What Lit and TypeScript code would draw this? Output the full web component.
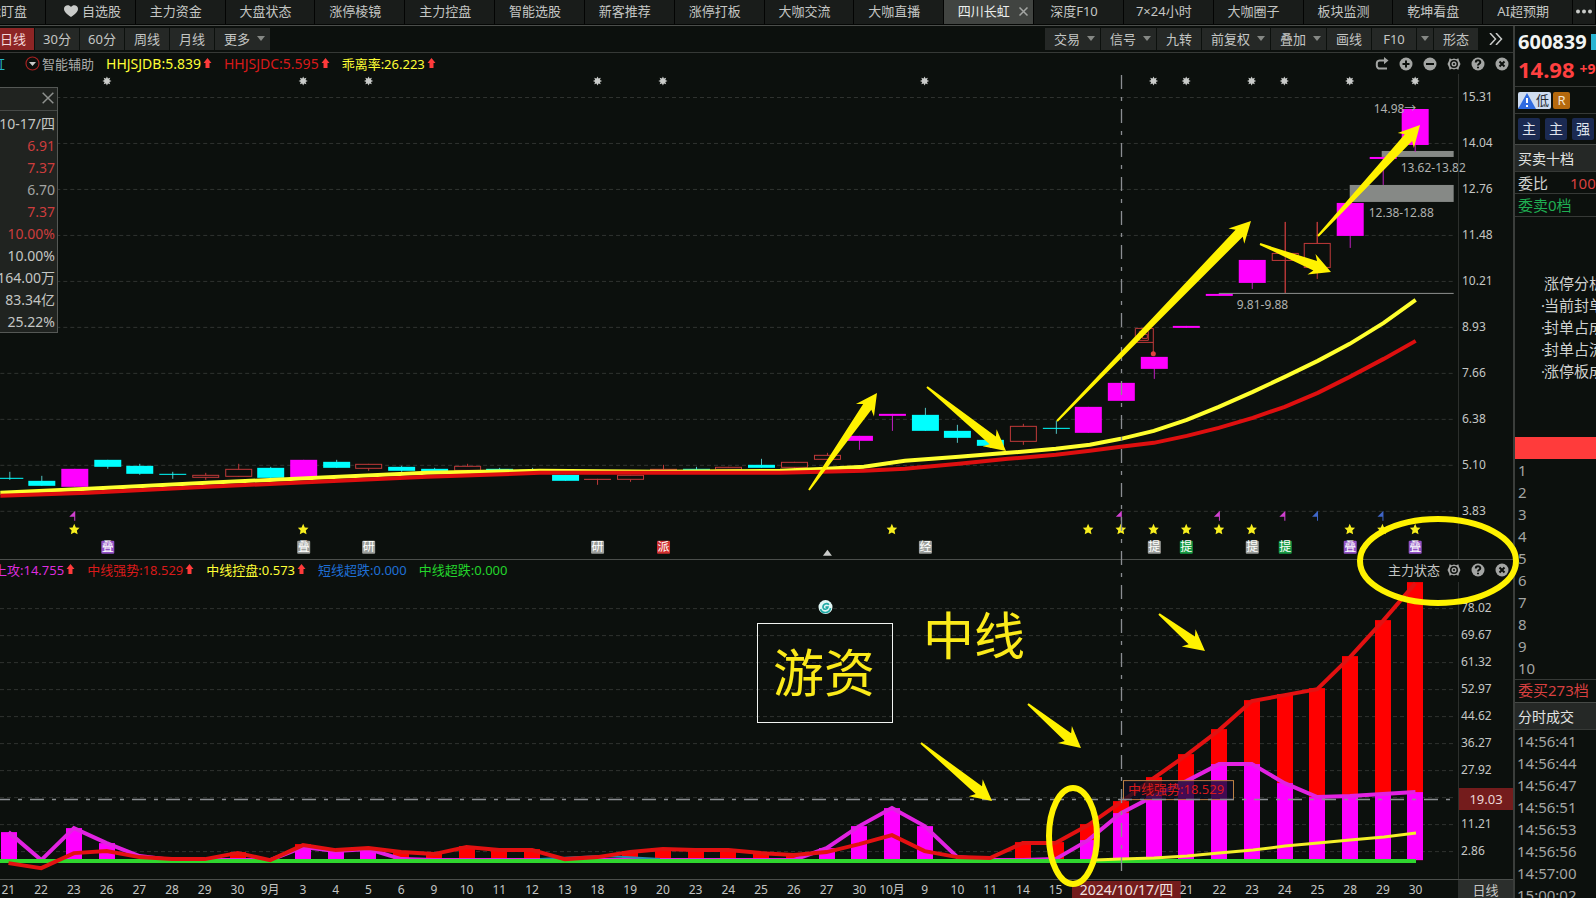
import { LitElement, html, svg, css } from "lit";
import { customElement } from "lit/decorators.js";
import { classMap } from "lit/directives/class-map.js";

type Kind = "mag" | "cyan" | "red";
/** kind, body top, body bottom, wick top, wick bottom (plot units) */
type Candle = [Kind, number, number, number, number];

const STEP = 32.72;
const cx = (i: number) => 8.5 + STEP * i;

const TABS = ["自选股", "主力资金", "大盘状态", "涨停棱镜", "主力控盘", "智能选股", "新客推荐", "涨停打板", "大咖交流",
  "大咖直播", "四川长虹", "深度F10", "7×24小时", "大咖圈子", "板块监测", "乾坤看盘", "AI超预期"];

const DATES = ["21", "22", "23", "26", "27", "28", "29", "30", "9月", "3", "4", "5", "6", "9", "10", "11", "12", "13",
  "18", "19", "20", "23", "24", "25", "26", "27", "30", "10月", "9", "10", "11", "14", "15"];
const DATES_AFTER = ["21", "22", "23", "24", "25", "28", "29", "30"];

const CANDLES: Candle[] = [
  ["cyan", 478, 479, 472, 480], ["cyan", 481, 486, 476, 486], ["mag", 469, 487, 469, 487],
  ["cyan", 460, 467, 460, 469], ["cyan", 466, 474, 464, 475], ["cyan", 474, 475, 472, 479],
  ["red", 475, 478, 473, 480], ["red", 469, 477, 464, 477], ["cyan", 468, 478, 467, 478],
  ["mag", 460, 478, 460, 478], ["cyan", 462, 468, 460, 468], ["red", 464, 469, 464, 471],
  ["cyan", 467, 471, 466, 472], ["cyan", 469, 473, 468, 473], ["red", 466, 471, 464, 471],
  ["cyan", 469, 471, 468, 471], ["cyan", 470, 471, 468, 471], ["cyan", 475, 481, 475, 481],
  ["red", 479, 479, 479, 485], ["red", 475, 480, 475, 482], ["red", 469, 471, 465, 471],
  ["cyan", 469, 470, 467, 471], ["red", 467, 470, 467, 470], ["cyan", 465, 468, 459, 468],
  ["red", 462, 468, 462, 469], ["red", 455, 460, 453, 460], ["mag", 436, 441, 436, 450],
  ["mag", 414, 416, 414, 431], ["cyan", 415, 431, 408, 431], ["cyan", 431, 438, 425, 443],
  ["cyan", 440, 446, 440, 448], ["red", 426, 442, 424, 445], ["cyan", 428, 429, 421, 434],
  ["mag", 407, 433, 407, 433], ["mag", 383, 401, 383, 401], ["mag", 357, 369, 357, 379],
  ["mag", 326, 328, 326, 328], ["mag", 294, 296, 294, 296], ["mag", 260, 283, 260, 289],
  ["red", 253, 261, 222, 293], ["red", 243, 268, 222, 279], ["mag", 203, 236, 203, 248],
  ["mag", 157, 159, 157, 185], ["mag", 109, 145, 109, 152],
];

const MA_FAST: number[][] = [[0, 493], [88, 489], [207, 483], [317, 478], [427, 473], [540, 471], [660, 472], [780, 471],
  [826, 469], [864, 467], [905, 461], [959, 457], [1008, 453], [1056, 449], [1090, 445], [1121, 439], [1154, 431],
  [1187, 420], [1219, 407], [1253, 392], [1285, 377], [1318, 361], [1350, 344], [1384, 323], [1416, 300]];
const MA_SLOW: number[][] = [[0, 496], [88, 493], [207, 487], [317, 482], [427, 477], [540, 473], [660, 473], [780, 473],
  [864, 471], [905, 469], [959, 464], [1008, 459], [1056, 455], [1090, 451], [1121, 447], [1154, 443], [1187, 436],
  [1219, 428], [1253, 418], [1285, 407], [1318, 393], [1350, 377], [1384, 359], [1416, 341]];

const SUNS = [3, 9, 11, 18, 20, 28, 35, 36, 38, 39, 41, 43];
const STARS = [2, 9, 27, 33, 34, 35, 36, 37, 38, 41, 42, 43];
const FLAGS: [number, string][] = [[2, "flag-m"], [34, "flag-m"], [37, "flag-m"], [39, "flag-m"], [40, "flag-b"], [42, "flag-b"]];
const BADGES: [number, string, string][] = [[3, "叠", "b-purple"], [9, "叠", "b-grey"], [11, "研", "b-grey"],
  [18, "研", "b-grey"], [20, "派", "b-red"], [28, "经", "b-grey"], [35, "提", "b-grey"], [36, "提", "b-green"],
  [38, "提", "b-grey"], [39, "提", "b-green"], [41, "叠", "b-purple"], [43, "叠", "b-purple"]];

const BASE = 860;
const STRONG = [863, 868, 853, 851, 857, 859, 859, 853, 860, 845, 850, 848, 852, 854, 847, 850, 850, 859, 857, 852, 849,
  850, 850, 853, 855, 852, 844, 835, 851, 857, 858, 843, 843, 825, 802, 778, 755, 730, 701, 695, 689, 657, 621, 583];
const ATTACK = [832, 860, 828, 843, 856, 860, 860, 860, 860, 847, 851, 849, 859, 860, 860, 860, 860, 860, 860, 860, 860,
  860, 860, 860, 860, 848, 826, 808, 826, 857, 860, 860, 859, 840, 813, 796, 781, 764, 764, 783, 797, 796, 794, 792];
const NO_STRONG_BAR = [0, 1, 2, 3, 4, 5, 6, 8, 17, 18, 25, 26, 27, 28, 29, 30];

const pts = (p: number[][]) => p.map((q) => q.join(",")).join(" ");
const line = (ys: number[]) => pts(ys.map((y, i) => [cx(i), y]));

/** Tapered arrow from a thin tail to a broad head. */
function arrow(x1: number, y1: number, x2: number, y2: number) {
  const len = Math.hypot(x2 - x1, y2 - y1);
  const ux = (x2 - x1) / len, uy = (y2 - y1) / len;
  const at = (back: number, side: number) => [x2 - ux * back - uy * side, y2 - uy * back + ux * side];
  return svg`<polygon class="mark" points=${pts([at(len, 1), at(17, 5), at(21, 11), [x2, y2], at(21, -11), at(17, -5), at(len, -1)])}></polygon>`;
}

const upArrow = html`<svg class="up" viewBox="0 0 9 11" aria-hidden="true"><path d="M4.500 0 8.500 5H6.500V10H2.500V5H.5Z"/></svg>`;
const caret = html`<svg class="caret" viewBox="0 0 8 5" aria-hidden="true"><path d="M0 0h8L4 5Z"/></svg>`;

const ICONS: Record<string, unknown> = {
  redo: svg`<path class="ln" d="M10.500 3.500H4.500A3 3 0 0 0 1.800 6.500v2A3 3 0 0 0 4.800 11.600H12"/><path d="M9 0 13.500 3.600 9 7.200Z"/>`,
  plus: svg`<circle cx="7" cy="7" r="6.500"/><path class="cut" d="M7 3.500v7M3.500 7h7"/>`,
  minus: svg`<circle cx="7" cy="7" r="6.500"/><path class="cut" d="M3 7h8"/>`,
  gear: svg`<path fill-rule="evenodd" d="M2.600 1.200 4.800 2.200 7 1.500 9.200 2.200 11.400 1.200 12 3.800 13.500 7 12 10.200 11.400 12.800 9.200 11.800 7 12.500 4.800 11.800 2.600 12.800 2 10.200.5 7 2 3.800ZM7 3A4 4 0 1 0 7 11 4 4 0 1 0 7 3Z"/><circle class="ln thin" cx="7" cy="7" r="1.800"/>`,
  help: svg`<circle cx="7" cy="7" r="6.500"/><path class="cut" d="M4.800 5.400C4.800 2.600 9.300 2.600 9.300 5.200 9.300 6.800 7 6.700 7 8.600M7 9.800V11.300"/>`,
  close: svg`<circle cx="7" cy="7" r="6.500"/><path class="cut" d="M4.500 4.500l5 5M9.500 4.500l-5 5"/>`,
};
const iconButton = (name: string, label: string) => html`<button class="icon" aria-label=${label}>
  <svg viewBox="0 0 14 14" aria-hidden="true">${ICONS[name]}</svg></button>`;

@customElement("app-root")
export class AppRoot extends LitElement {
  static styles = css`
    :host {
      display: flex; flex-direction: column; position: relative; height: 100vh; overflow: hidden;
      background: #0c100d; color: #c4c6c4; font: 13px/20px "Noto Sans", "Noto Sans CJK SC", sans-serif;
      white-space: nowrap;
    }
    * { box-sizing: border-box; }
    button { font: inherit; color: inherit; background: none; border: 0; padding: 0; margin: 0; white-space: nowrap; }
    ol, ul, dl, dd, p, h2 { margin: 0; padding: 0; list-style: none; font: inherit; }
    svg { display: block; }

    .tabs { flex: none; display: grid; grid-template-columns: 46px repeat(17, 1fr) 23px; height: 26px;
      padding-bottom: 1px; background: #050705; border-bottom: 1px solid #4b4e4b; }
    .tab { display: flex; align-items: center; justify-content: center; gap: 4px; background: #191c1a;
      border-right: 1px solid #030403; padding-right: 9px; overflow: hidden; height: 24px; line-height: 22px; padding-bottom: 2px; }
    .tab.first { justify-content: flex-end; padding-right: 18px; }
    .tab.fav { padding: 0 0 2px 4px; }
    .tab.on { background: #414441; color: #eceeec; padding: 0 0 2px 8px; gap: 9px; }
    .tab.more { padding-right: 0; }
    .heart { width: 14px; height: 12px; fill: #c9cbc9; }
    .x { width: 9px; height: 9px; stroke: #a4a6a4; stroke-width: 1.500; fill: none; }
    .dots { width: 19px; height: 5px; fill: #c9cbc9; }

    .body { flex: 1; min-height: 0; display: grid; grid-template-columns: minmax(0, 1fr) 83px; }
    .left { display: flex; flex-direction: column; min-width: 0; min-height: 0; }

    .toolbar { flex: none; display: flex; justify-content: space-between; align-items: center; height: 27px;
      border-bottom: 1px solid #363936; padding-top: 1px; padding-bottom: 2px; }
    .group { display: flex; gap: 1px; }
    .tool { height: 22px; line-height: 20px; width: 44px; background: #252826; display: flex; align-items: center;
      justify-content: center; gap: 7px; }
    .tool.cur { background: #8d2525; color: #f4dada; width: 34px; padding-right: 8px; }
    .tool.drop { width: auto; padding: 0 5px 0 9px; }
    .tool.slim { width: 16px; }
    .tool.next { background: none; width: 34px; }
    .caret { width: 8px; height: 5px; fill: #858885; }
    .chev { width: 14px; height: 12px; fill: none; stroke: #c9cbc9; stroke-width: 1.500; }

    .pane { min-height: 0; display: grid; grid-template-columns: minmax(0, 1fr) 55px; position: relative; }
    .price { flex: 507; grid-template-rows: 21px minmax(0, 1fr); border-bottom: 1px solid #4b4e4b; }
    .force { flex: 320; grid-template-rows: 22px minmax(0, 1fr); border-bottom: 1px solid #4b4e4b; }
    .head { grid-column: 1 / -1; display: flex; align-items: center; justify-content: space-between; padding: 0 4px 2px 0; }
    .price .head { padding-bottom: 0; }
    .legend { display: flex; align-items: center; gap: 12px; }
    .legend.scrolled { margin-left: -6px; }
    .item { display: flex; align-items: center; gap: 2px; }
    .item.wide { font-size: 14px; }
    .picker { display: flex; align-items: center; gap: 2px; color: #a9aba9; }
    .ring { width: 15px; height: 15px; }
    .ring circle { fill: none; stroke: #a52222; stroke-width: 1.200; }
    .ring path { fill: #c9cbc9; }
    .stock { color: #23b5c8; width: 14px; overflow: hidden; display: flex; justify-content: flex-end; margin: 0 8px 0 -9px; }
    .up { width: 9px; height: 11px; fill: #ff3b3b; }
    .yellow { color: #ffff35; }
    .redtx { color: #d81a1a; }
    .magtx { color: #dd2ddd; }
    .bluetx { color: #1f6fd6; }
    .greentx { color: #23d52b; }
    .icons { display: flex; align-items: center; gap: 10px; }
    .icons h2 { margin-right: -3px; }
    .icon { width: 14px; height: 14px; }
    .icon svg { width: 14px; height: 14px; fill: #a3a5a3; }
    .ln { fill: none; stroke: #a3a5a3; stroke-width: 2; }
    .ln.thin { stroke-width: 1.400; }
    .cut { fill: none; stroke: #0c100d; stroke-width: 2; }

    .plot { width: 100%; height: 100%; overflow: visible; }
    .axis { display: grid; border-left: 1px solid #2c2f2c; font-size: 12px; padding-left: 3px; position: relative; align-items: center; }
    .axis.a1 { grid-template-rows: repeat(10, 46fr) 25fr; }
    .axis.a2 { grid-template-rows: 13fr repeat(10, 27fr) 14fr; padding-left: 2px; }
    .now { position: absolute; left: 0; right: 0; top: 73%; height: 22px; line-height: 22px; margin-top: -11px;
      background: #741c1c; color: #ead6d6; text-align: center; font-size: 13px; }

    .grid { stroke: #303330; stroke-width: 1; stroke-dasharray: 4 3; }
    .mag { fill: #ff00ff; stroke: none; }
    .cyan { fill: #00ffff; stroke: none; }
    .red { fill: #0c100d; stroke: #c03a3a; stroke-width: 1; }
    .w-mag { stroke: #c41fc4; }
    .w-cyan { stroke: #52c4c4; }
    .w-red { stroke: #c03a3a; }
    .fast { fill: none; stroke: #ffff2e; stroke-width: 4; }
    .slow { fill: none; stroke: #de0f0f; stroke-width: 4; }
    .gap { fill: #868986; }
    .gapline { stroke: #8f928f; }
    .note { font-size: 12px; fill: #b0b2b0; dominant-baseline: central; }
    .sun { fill: #c9cbc9; }
    .star { fill: #f7ee1e; }
    .flag-m { fill: #d040d0; }
    .flag-b { fill: #3f66c8; }
    .badge { font-size: 12px; fill: #fff; text-anchor: middle; dominant-baseline: central; }
    .b-purple { fill: #9152c4; }
    .b-grey { fill: #9c9f9c; }
    .b-red { fill: #d03030; }
    .b-green { fill: #189a45; }
    .hint { fill: none; stroke: #c03a3a; }
    .hint-dot { fill: #e04040; }

    .bar-m { fill: #ff00ff; }
    .bar-r { fill: #ff0000; }
    .l-m { fill: none; stroke: #e222e2; stroke-width: 4; }
    .l-r { fill: none; stroke: #e31111; stroke-width: 4; }
    .l-y { fill: none; stroke: #f5ef28; stroke-width: 3; }
    .l-b { fill: none; stroke: #2a8ab0; stroke-width: 2; }
    .zero { stroke: #2fd62f; stroke-width: 4; }
    .tip { fill: rgba(14, 14, 34, 0.780); stroke: #bb8044; }
    .tiptx { fill: #d81a1a; font-size: 13px; dominant-baseline: central; }
    .swirl { fill: #dff6f4; }
    .swirl-ln { fill: none; stroke: #1fa9a5; stroke-width: 1.600; }

    .info { position: absolute; left: 0; top: 34px; width: 58px; border: 1px solid #555855; border-left: 0;
      background: #202320; font-size: 14px; line-height: 22px; overflow: hidden; }
    .info-head { display: flex; justify-content: flex-end; align-items: center; height: 23px; padding: 0 3px 2px 0;
      border-bottom: 1px solid #464946; }
    .info-head .x { width: 12px; height: 12px; stroke: #8f928f; stroke-width: 1.100; }
    .info dl { display: flex; flex-direction: column; align-items: flex-end; padding: 2px 2px 0 0; margin-bottom: -1px; }
    .hot { color: #cc3d3d; }
    .dim { color: #a3a5a3; }

    .dates { flex: none; display: grid; grid-template-columns: minmax(0, 1fr) 55px; height: 18px; line-height: 20px; font-size: 12px; }
    .slots { display: grid; grid-template-columns: repeat(44, minmax(0, 1fr)); margin-left: -8px; padding-right: 26px; text-align: center; }
    .slots span { display: flex; justify-content: center; }
    .slots .picked { grid-column: 34 / span 3; width: 109px; height: 17px; background: #741c1c; color: #f0e2e2; font-size: 14px; margin-top: 1px; line-height: 18px; }
    .slots .after { grid-column-start: 37; }
    .period { background: #2b2e2c; text-align: center; font-size: 13px; line-height: 18px; }

    .side { border-left: 2px solid #3b3e3b; display: flex; flex-direction: column; min-height: 0; overflow: hidden;
      font-size: 15px; line-height: 22px; }
    .side > * { flex: none; padding-left: 3px; }
    .code { display: flex; align-items: center; gap: 4px; height: 31px; font-size: 20px; font-weight: 700; color: #f2f4f2; }
    .code i { width: 16px; height: 16px; background: #29b4d2; }
    .quote { display: flex; align-items: center; gap: 5px; height: 30px; padding-bottom: 5px; font-size: 22px; font-weight: 700; color: #ff4040;
      border-bottom: 1px solid #363936; }
    .quote small { font-size: 14px; }
    .tags { display: flex; align-items: center; gap: 2px; height: 27px; border-bottom: 1px solid #363936; }
    .low { display: flex; height: 17px; line-height: 16px; font-size: 13px; background: #cfdcf0; color: #262c34; border-radius: 2px; padding-right: 2px; }
    .low svg { width: 18px; height: 17px; }
    .rr { width: 17px; height: 17px; line-height: 17px; text-align: center; font-size: 13px; background: #b5690e; color: #f4e6d0; border-radius: 2px; }
    .chips { display: flex; align-items: center; gap: 5px; height: 31px; border-bottom: 1px solid #464946; }
    .chip { width: 22px; height: 22px; line-height: 20px; font-size: 14px; background: #1b2a52; color: #dfe3ec; text-align: center; flex: none; border-radius: 2px; }
    .title { height: 27px; line-height: 28px; background: #252826; color: #e2e4e2; font-size: 14px; border-bottom: 1px solid #363936; }
    .row { display: flex; gap: 22px; height: 22px; line-height: 22px; border-bottom: 1px solid #363936; color: #cfd1cf; }
    .row .hot { color: #d84040; }
    .ask { height: 23px; line-height: 22px; border-bottom: 1px solid #363936; color: #1fae52; }
    .side > .limit { flex: 1; padding: 55px 0 0 29px; min-height: 0; color: #cfd1cf; }
    .limit li::before { content: "·"; display: inline-block; width: 2px; margin-left: -2px; text-indent: -1px; }
    .block { height: 22px; background: #ff3b3b; }
    .levels, .times { color: #a3a5a3; }
    .levels { border-bottom: 1px solid #363936; }
    .bid { height: 23px; line-height: 21px; border-bottom: 1px solid #464946; color: #d84040; }
    .times { height: 168px; overflow: hidden; }
    .side > .times { padding-left: 2px; }

    .overlay { position: absolute; inset: 0; width: 100%; height: 100%; pointer-events: none; }
    .cross { stroke: #8b8e92; stroke-width: 1.300; stroke-dasharray: 14 8 4 8; }
    .mark { fill: #fff200; }
    .loop { fill: none; stroke: #fff200; stroke-width: 6; }
    .frame { fill: none; stroke: #f2f4f2; stroke-width: 1; }
    .big { fill: #fbea1a; font-size: 51px; dominant-baseline: central; text-anchor: middle; }
  `;

  private candle = ([kind, top, bottom, wt, wb]: Candle, i: number) => {
    const x = Math.round(cx(i));
    const hollow = kind === "red";
    return svg`<path class=${"w-" + kind} d=${`M${x + 0.5} ${wt}V${wb}`}></path>
      <rect class=${kind} x=${x - 13 + (hollow ? 0.5 : 0)} y=${top + (hollow ? 0.5 : 0)}
        width=${hollow ? 26 : 27} height=${Math.max(bottom - top - (hollow ? 1 : 0), hollow ? 0.1 : 1)}></rect>
      ${hollow && i >= 39 ? svg`<path class="w-red" d=${`M${x + 0.5} ${wt}V${i === 39 ? wb : top}`}></path>` : ""}`;
  };

  private pricePlot() {
    const rays = Array.from({ length: 16 }, (_, k) => {
      const r = k % 2 ? 2.6 : 4.6, a = (k * Math.PI) / 8;
      return [r * Math.cos(a), r * Math.sin(a)];
    });
    return html`<svg class="plot" viewBox="0 74 1458 485" role="img" aria-label="日K线">
      ${Array.from({ length: 10 }, (_, k) => svg`<path class="grid" d=${`M0 ${97.5 + 46 * k}H1453`}></path>`)}
      <rect class="gap" x="1382" y="151" width="72" height="6"></rect>
      <rect class="gap" x="1350" y="185" width="104" height="17"></rect>
      ${CANDLES.map(this.candle)}
      <path class="gapline" d="M1219 293.500H1454"></path>
      <polyline class="fast" points=${pts(MA_FAST)}></polyline>
      <polyline class="slow" points=${pts(MA_SLOW)}></polyline>
      <text class="note" x="1374" y="109">14.98→</text>
      <text class="note" x="1401" y="168">13.62-13.82</text>
      <text class="note" x="1369" y="213">12.38-12.88</text>
      <text class="note" x="1237" y="305">9.81-9.88</text>
      <path class="hint" d="M1153.500 354V328.500H1135.500V342.500H1153.500M1139.500 331.500h9v9h-9ZM1142.500 334.500h5v4h-5Z"></path>
      <circle class="hint-dot" cx="1153.500" cy="354" r="2.500"></circle>
      ${SUNS.map((i) => svg`<polygon class="sun" points=${pts(rays.map(([x, y]) => [cx(i) + x, 81 + y]))}></polygon>`)}
      ${FLAGS.map(([i, c]) => svg`<path class=${c} d=${`M${cx(i) + 1} 511V521H${cx(i)}V517H${cx(i) - 5}Z`}></path>`)}
      ${STARS.map((i) => svg`<path class="star" transform=${`translate(${cx(i)} 529.500)`}
        d="M0-5.500 1.600-1.800 5.300-1.500 2.600 1.200 3.400 5 0 3.200-3.400 5-2.600 1.200-5.300-1.500-1.600-1.800Z"></path>`)}
      ${BADGES.map(([i, t, c]) => svg`<rect class=${c} x=${Math.round(cx(i)) - 6} y="541" width="13" height="13" rx="1"></rect>
        <text class="badge" x=${Math.round(cx(i)) + 0.5} y="547">${t}</text>`)}
      <path class="sun" d="M827.500 550 832 556H823Z"></path>
    </svg>`;
  }

  private forcePlot() {
    return html`<svg class="plot" viewBox="0 582 1458 297" role="img" aria-label="主力状态">
      ${Array.from({ length: 10 }, (_, k) => svg`<path class="grid" d=${`M0 ${608.5 + 27 * k}H1453`}></path>`)}
      ${STRONG.map((y, i) => NO_STRONG_BAR.includes(i) ? "" : svg`<rect class="bar-r" x=${Math.round(cx(i)) - 8} y=${y - 1} width="16" height=${BASE + 1 - y}></rect>`)}
      ${ATTACK.map((y, i) => y > 855 || i === 4 ? "" : svg`<rect class="bar-m" x=${Math.round(cx(i)) - 8} y=${y} width="16" height=${BASE - y}></rect>`)}
      <polyline class="l-m" points=${line(ATTACK)}></polyline>
      <path class="l-b" d="M540 859 580 857 600 856 625 857 660 859"></path>
      <path class="zero" d="M0 861H1416"></path>
      <polyline class="l-r" points=${line(STRONG)}></polyline>
      <polyline class="l-y" points="1095,860 1121,859 1154,858 1187,856 1219,853 1253,850 1285,846 1318,843 1350,840 1384,837 1416,833"></polyline>
      <rect class="tip" x="1123.500" y="780.500" width="110" height="19"></rect>
      <text class="tiptx" x="1128" y="789">中线强势:18.529</text>
      <circle class="swirl" cx="825.500" cy="607" r="7"></circle>
      <path class="swirl-ln" d="M825.500 607h2.500a2.600 2.600 0 0 1-5 .500 3.500 3.500 0 0 1 6-2.800M820.500 609a5.200 5.200 0 0 0 10-1"></path>
    </svg>`;
  }

  render() {
    const cross = html`<svg class="x" viewBox="0 0 9 9" aria-hidden="true"><path d="M.5.5l8 8M8.500.5l-8 8"/></svg>`;
    return html`
      <nav class="tabs">
        <button class="tab first">智能盯盘</button>
        ${TABS.map((t, i) => html`<button class=${classMap({ tab: true, fav: i === 0, on: t === "四川长虹" })}>
          ${i === 0 ? html`<svg class="heart" viewBox="0 0 14 12" aria-hidden="true"><path d="M7 12C3 9.500 0 7 0 3.800 0 0 5-1.200 7 2c2-3.200 7-2 7 1.800C14 7 11 9.500 7 12Z"/></svg>` : ""}${t}${t === "四川长虹" ? cross : ""}</button>`)}
        <button class="tab more" aria-label="更多页面"><svg class="dots" viewBox="0 0 19 5"><circle cx="3" cy="2.500" r="2"/><circle cx="9" cy="2.500" r="2"/><circle cx="15" cy="2.500" r="2"/></svg></button>
      </nav>
      <div class="body">
        <main class="left">
          <div class="toolbar">
            <div class="group">
              <button class="tool cur">日线</button>
              ${["30分", "60分", "周线", "月线"].map((t) => html`<button class="tool">${t}</button>`)}
              <button class="tool drop">更多${caret}</button>
            </div>
            <div class="group">
              <button class="tool drop">交易${caret}</button>
              <button class="tool drop">信号${caret}</button>
              <button class="tool">九转</button>
              <button class="tool drop">前复权${caret}</button>
              <button class="tool drop">叠加${caret}</button>
              <button class="tool">画线</button>
              <button class="tool">F10</button>
              <button class="tool slim" aria-label="F10 选项">${caret}</button>
              <button class="tool">形态</button>
              <button class="tool next" aria-label="展开"><svg class="chev" viewBox="0 0 14 12"><path d="M1 0l5.500 6L1 12M7 0l5.500 6L7 12"/></svg></button>
            </div>
          </div>

          <section class="pane price">
            <div class="head">
              <div class="legend">
                <span class="stock">虹</span>
                <button class="picker"><svg class="ring" viewBox="0 0 15 15" aria-hidden="true"><circle cx="7.500" cy="7.500" r="6.500"/><path d="M4 6h7L7.500 10Z"/></svg>智能辅助</button>
                <span class="item wide yellow">HHJSJDB:5.839${upArrow}</span>
                <span class="item wide redtx">HHJSJDC:5.595${upArrow}</span>
                <span class="item yellow">乖离率:26.223${upArrow}</span>
              </div>
              <div class="icons">
                ${iconButton("redo", "重做")}${iconButton("plus", "放大")}${iconButton("minus", "缩小")}
                ${iconButton("gear", "设置")}${iconButton("help", "帮助")}${iconButton("close", "关闭")}
              </div>
            </div>
            ${this.pricePlot()}
            <div class="axis a1">
              ${["15.31", "14.04", "12.76", "11.48", "10.21", "8.93", "7.66", "6.38", "5.10", "3.83"].map((v) => html`<span>${v}</span>`)}
            </div>
            <aside class="info">
              <div class="info-head"><button aria-label="关闭">${cross}</button></div>
              <dl>
                <dd>2024-10-17/四</dd><dd class="hot">6.91</dd><dd class="hot">7.37</dd><dd class="dim">6.70</dd>
                <dd class="hot">7.37</dd><dd class="hot">10.00%</dd><dd>10.00%</dd><dd>164.00万</dd><dd>83.34亿</dd><dd>25.22%</dd>
              </dl>
            </aside>
          </section>

          <section class="pane force">
            <div class="head">
              <div class="legend scrolled">
                <span class="item magtx">上攻:14.755${upArrow}</span>
                <span class="item redtx">中线强势:18.529${upArrow}</span>
                <span class="item yellow">中线控盘:0.573${upArrow}</span>
                <span class="item bluetx">短线超跌:0.000</span>
                <span class="item greentx">中线超跌:0.000</span>
              </div>
              <div class="icons"><h2>主力状态</h2>${iconButton("gear", "设置")}${iconButton("help", "帮助")}${iconButton("close", "关闭")}</div>
            </div>
            ${this.forcePlot()}
            <div class="axis a2">
              <i></i>
              ${["78.02", "69.67", "61.32", "52.97", "44.62", "36.27", "27.92", "", "11.21", "2.86"].map((v) => html`<span>${v}</span>`)}
              <span class="now">19.03</span>
            </div>
          </section>

          <div class="dates">
            <div class="slots">
              ${DATES.map((d) => html`<span>${d}</span>`)}
              <span class="picked">2024/10/17/四</span>
              ${DATES_AFTER.map((d) => html`<span>${d}</span>`)}
            </div>
            <button class="period">日线</button>
          </div>
        </main>

        <aside class="side">
          <div class="code">600839<i></i></div>
          <div class="quote">14.98<small>+9.99%</small></div>
          <div class="tags">
            <span class="low"><svg viewBox="0 0 18 17" aria-hidden="true"><path fill="#2f6be0" d="M9 1 18 17H0Z"/><path fill="none" stroke="#fff" stroke-width="2" d="M9 6v5M9 13v2"/></svg>低</span>
            <span class="rr">R</span>
          </div>
          <div class="chips"><button class="chip">主</button><button class="chip">主</button><button class="chip">强</button></div>
          <h2 class="title">买卖十档</h2>
          <div class="row"><span>委比</span><span class="hot">100%</span></div>
          <p class="ask">委卖0档</p>
          <div class="limit">
            <p>涨停分析</p>
            <ul><li>当前封单</li><li>封单占成</li><li>封单占流</li><li>涨停板成</li></ul>
          </div>
          <div class="block"></div>
          <ol class="levels">${Array.from({ length: 10 }, (_, k) => html`<li>${k + 1}</li>`)}</ol>
          <p class="bid">委买273档</p>
          <h2 class="title">分时成交</h2>
          <ol class="times">${["14:56:41", "14:56:44", "14:56:47", "14:56:51", "14:56:53", "14:56:56", "14:57:00", "15:00:02"].map((t) => html`<li>${t}</li>`)}</ol>
        </aside>
      </div>

      <svg class="overlay" viewBox="0 0 1596 898" aria-hidden="true">
        <path class="cross" d="M1121.500 75V871"></path>
        <path class="cross" d="M-4 799.500H1451"></path>
        ${arrow(809, 490, 877, 393)}${arrow(927, 387, 1006, 451)}${arrow(1057, 421, 1251, 221)}${arrow(1260, 244, 1331, 272)}
        ${arrow(1318, 236, 1420, 125)}${arrow(1159, 614, 1205, 651)}${arrow(1028, 704, 1081, 748)}${arrow(921, 743, 992, 801)}
        <ellipse class="loop" cx="1438" cy="561" rx="78" ry="42"></ellipse>
        <ellipse class="loop" cx="1073" cy="836" rx="24" ry="48"></ellipse>
        <rect class="frame" x="757.500" y="623.500" width="135" height="99"></rect>
        <text class="big" x="824" y="672">游资</text>
        <text class="big" x="974" y="635">中线</text>
      </svg>
    `;
  }
}
